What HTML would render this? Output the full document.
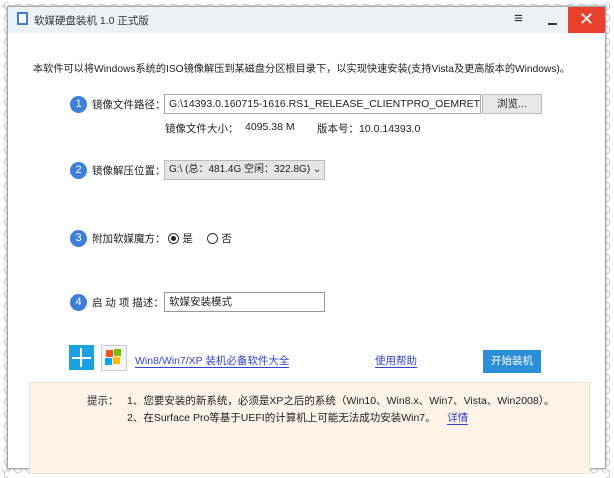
<!DOCTYPE html>
<html><head><meta charset="utf-8"><style>
*{margin:0;padding:0;box-sizing:border-box}
body{width:614px;height:478px;background:#fff;position:relative;overflow:hidden;font-family:"Liberation Sans","Noto Sans CJK SC",sans-serif;font-size:11px;color:#222}
.win{position:absolute;left:7px;top:6px;width:599px;height:463px;background:#fff;border:1px solid #aaa;box-shadow:0 0 2px #888}
.edge{position:absolute;background-repeat:repeat}
.abs{position:absolute;white-space:nowrap}
.circ{position:absolute;width:17px;height:17px;border-radius:50%;background:#3d7fd9;color:#fff;font-size:11px;text-align:center;line-height:17px}
.box{position:absolute;border:1px solid #aaa;background:#fff;height:20px;line-height:18px;padding-left:4px;white-space:nowrap;overflow:hidden}
a{color:#3344cc;text-decoration:none;border-bottom:1px solid #3344cc}
.radio{display:inline-block;width:11px;height:11px;border:1px solid #333;border-radius:50%;vertical-align:-2px;position:relative}
.radio.on:after{content:"";position:absolute;left:2px;top:2px;width:5px;height:5px;border-radius:50%;background:#222}
</style></head><body>
<div class="edge" style="left:0;top:0;width:614px;height:8px;background-image:radial-gradient(circle at 6px 8px,#fff 3px,#bbb 3.5px,transparent 4.5px);background-size:12px 8px"></div>
<div class="edge" style="left:0;top:469px;width:614px;height:9px;background-image:radial-gradient(circle at 6px 0,#fff 3px,#bbb 3.5px,transparent 4.5px);background-size:12px 9px"></div>
<div class="edge" style="left:0;top:0;width:8px;height:478px;background-image:radial-gradient(circle at 8px 6px,#fff 3px,#bbb 3.5px,transparent 4.5px);background-size:8px 12px"></div>
<div class="edge" style="left:606px;top:0;width:8px;height:478px;background-image:radial-gradient(circle at 0 6px,#fff 3px,#bbb 3.5px,transparent 4.5px);background-size:8px 12px"></div>
<div class="win"></div>
<div class="abs" style="left:8px;top:7px;width:597px;height:26px;background:#edf1f6"></div>
<div class="abs" style="left:17px;top:12px;width:11px;height:13px;border:2px solid #3d7fd9;background:#fff"></div>
<div class="abs" style="left:34px;top:13px;font-size:10.5px;color:#333">软媒硬盘装机 1.0 正式版</div>
<div class="abs" style="left:514px;top:10px;font-size:15px;color:#333">≡</div>
<div class="abs" style="left:548px;top:23px;width:9px;height:2px;background:#333"></div>
<div class="abs" style="left:568px;top:7px;width:37px;height:26px;background:#e8402c;color:#fff;font-size:18px;text-align:center;line-height:24px">✕</div>
<div class="abs" style="left:33px;top:60px;font-size:10.2px">本软件可以将Windows系统的ISO镜像解压到某磁盘分区根目录下，以实现快速安装(支持Vista及更高版本的Windows)。</div>
<div class="circ" style="left:70px;top:96px">1</div>
<div class="abs" style="left:92px;top:97px;font-size:10.5px">镜像文件路径：</div>
<div class="box" style="left:164px;top:94px;width:317px;font-size:10.5px">G:\14393.0.160715-1616.RS1_RELEASE_CLIENTPRO_OEMRET_X64FRE</div>
<div class="box" style="left:482px;top:94px;width:60px;background:#e8e8e8;border-color:#bbb;text-align:center;padding:0;font-size:10.5px">浏览...</div>
<div class="abs" style="left:165px;top:121px;font-size:10.5px">镜像文件大小：</div>
<div class="abs" style="left:245px;top:121px;font-size:10.5px">4095.38 M</div>
<div class="abs" style="left:317px;top:121px;font-size:10.5px">版本号：10.0.14393.0</div>
<div class="circ" style="left:70px;top:162px">2</div>
<div class="abs" style="left:92px;top:163px;font-size:10.5px">镜像解压位置：</div>
<div class="box" style="left:164px;top:160px;width:161px;background:#e5e5e5;border-color:#bbb;font-size:10px">G:\ (总：481.4G 空闲：322.8G) ⌄</div>
<div class="circ" style="left:70px;top:230px">3</div>
<div class="abs" style="left:92px;top:231px;font-size:10.5px">附加软媒魔方： <span class="radio on"></span> 是 &nbsp;&nbsp;&nbsp; <span class="radio"></span> 否</div>
<div class="circ" style="left:70px;top:294px">4</div>
<div class="abs" style="left:92px;top:295px;font-size:10.5px">启 动 项 描述：</div>
<div class="box" style="left:164px;top:292px;width:161px;border-color:#999;font-size:10.5px">软媒安装模式</div>
<div class="abs" style="left:69px;top:345px;width:25px;height:25px;background:#1ba1e2"></div>
<div class="abs" style="left:80px;top:348px;width:2px;height:19px;background:#fff"></div>
<div class="abs" style="left:72px;top:357px;width:19px;height:2px;background:#fff"></div>
<div class="abs" style="left:101px;top:345px;width:26px;height:26px;border:1px solid #ccc;background:#f6f6f6"></div>
<div class="abs" style="left:106px;top:350px;width:7px;height:7px;background:#f25022"></div>
<div class="abs" style="left:114px;top:349px;width:7px;height:7px;background:#7fba00"></div>
<div class="abs" style="left:105px;top:358px;width:7px;height:7px;background:#00a4ef"></div>
<div class="abs" style="left:113px;top:357px;width:7px;height:7px;background:#ffb900"></div>
<div class="abs" style="left:135px;top:353px;font-size:10.5px"><a>Win8/Win7/XP 装机必备软件大全</a></div>
<div class="abs" style="left:375px;top:353px;font-size:10.5px"><a>使用帮助</a></div>
<div class="abs" style="left:483px;top:350px;width:58px;height:23px;background:#2b8fd8;color:#fff;text-align:center;line-height:23px;font-size:10.5px">开始装机</div>
<div class="abs" style="left:29px;top:382px;width:561px;height:92px;background:#fdf3e6;border:1px solid #f0e2cc"></div>
<div class="abs" style="left:87px;top:393px;font-size:10.5px">提示：</div>
<div class="abs" style="left:127px;top:393px;font-size:10.5px">1、您要安装的新系统，必须是XP之后的系统（Win10、Win8.x、Win7、Vista、Win2008）。</div>
<div class="abs" style="left:127px;top:410px;font-size:10.5px">2、在Surface Pro等基于UEFI的计算机上可能无法成功安装Win7。 &nbsp;&nbsp;&nbsp;<a>详情</a></div>
</body></html>
